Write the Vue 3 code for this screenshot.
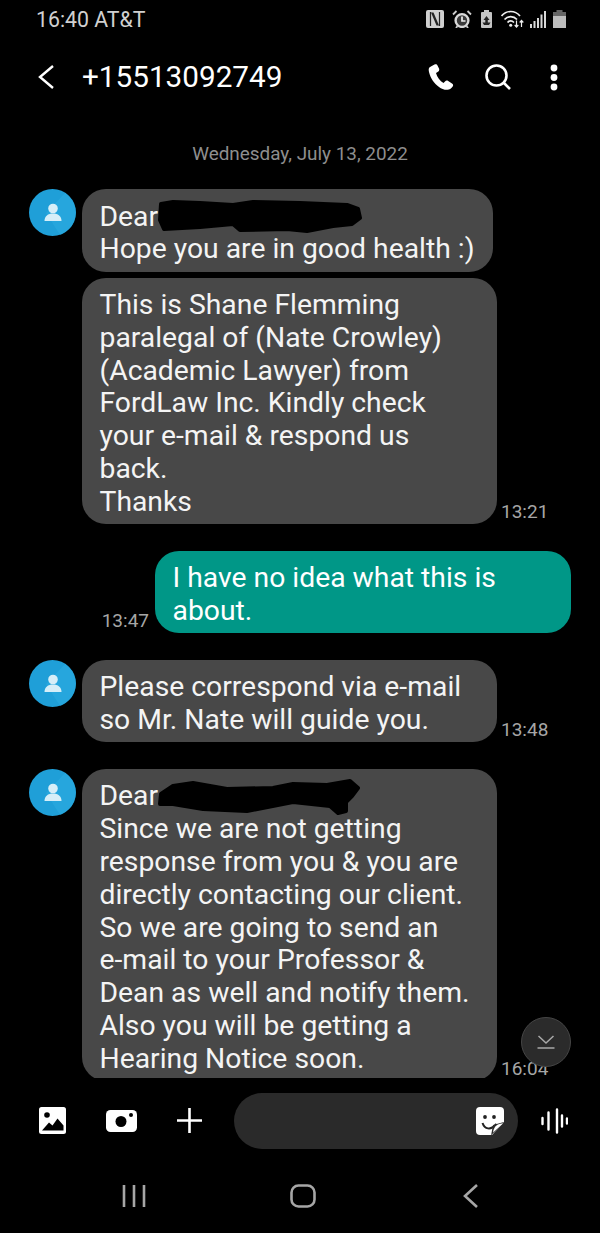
<template>
  <div class="phone">
    <div class="status-bar">
      <span class="status-text">16:40 AT&amp;T</span>
      <div class="status-icons">
        <svg class="ic-nfc" viewBox="0 0 20 18"><rect width="18" height="18" rx="2" fill="#cfcfcf"/><path d="M4.500 2v14M13.500 2v14" stroke="#222" stroke-width="1.200" fill="none"/><path d="M5 2.500h2.500l5.500 13h-2.500z" fill="#222"/></svg>
        <svg class="ic-alarm" viewBox="0 0 20 18"><circle cx="10" cy="10.500" r="6.400" fill="#3a3a3a" stroke="#d8d8d8" stroke-width="2.400"/><path d="M10 6.500v4.500h3.500" fill="none" stroke="#eee" stroke-width="1.700"/><path d="M1 4.500 4.500 1M19 4.500 15.500 1M5.500 16l-1.500 2M14.500 16l1.500 2" stroke="#ccc" stroke-width="1.800" fill="none"/></svg>
        <svg class="ic-saver" viewBox="0 0 17 18"><path d="M6 0h5v2h2a1 1 0 0 1 1 1v14a1 1 0 0 1-1 1H4a1 1 0 0 1-1-1V3a1 1 0 0 1 1-1h2z" fill="#c4c4c4"/><path d="M8.500 6l3 4H9.800v2.500h2.700L11 15H6l-1.500-2.500h2.800V10H5.500z" fill="#222"/></svg>
        <svg class="ic-wifi" viewBox="0 0 23 18" fill="none" stroke="#eee" stroke-width="1.700"><path d="M0.500 6C5.500 0 14 0 19 6M3.500 9.500c3.500-3.800 9-3.800 12.500 0M6.500 12.500c2-2 4.500-2 6.500 0"/><circle cx="9.700" cy="15.300" r="1.500" fill="#eee" stroke="none"/><path d="M15.500 10.500v6.500M13.700 15l1.800 2 1.800-2M20.500 17v-6.500M18.700 12.500l1.800-2 1.800 2" stroke-width="1.200"/></svg>
        <svg class="ic-signal" viewBox="0 0 16 17" fill="#d8d8d8"><rect x="0" y="13" width="2" height="4"/><rect x="3.500" y="10" width="2" height="7"/><rect x="7" y="7" width="2" height="10"/><rect x="10.500" y="3.500" width="2" height="13.500"/><rect x="14" y="0" width="2" height="17"/></svg>
        <svg class="ic-battery" viewBox="0 0 14 18"><rect x="4.500" y="0" width="6" height="2" fill="#666"/><rect x="1" y="2" width="13" height="4" fill="#666"/><rect x="1" y="6" width="13" height="12" fill="#bdbdbd"/></svg>
      </div>
    </div>

    <header class="top-bar">
      <svg class="ic-back" viewBox="0 0 16 24" fill="none" stroke="#fff" stroke-width="2.400"><path d="M15 1 2 12l13 11"/></svg>
      <span class="title">+15513092749</span>
      <svg class="ic-phone" viewBox="0 0 26 26"><path d="M6.500 0.500 2 3C0.500 4 0.500 6 1 8c1.500 6 5 11.500 10 15 2.500 2 5.500 3 8.500 2.800 2 0 3.500-1 5-3 1-1.200.8-2.500-.5-3.300l-3.800-2.500c-1.200-.8-2.300-.6-3.200.4l-1.500 1.600c-3.500-2-6.500-6-7.500-10l2-1.200c1.200-.8 1.500-2 1-3.200L9.500 1.500C9 .2 7.800-.2 6.500 .5z" fill="#fff"/></svg>
      <svg class="ic-search" viewBox="0 0 26 26" fill="none" stroke="#fff" stroke-width="2.600"><circle cx="11.500" cy="11.500" r="10"/><path d="m18.500 18.500 6.500 6.500"/></svg>
      <svg class="ic-dots" viewBox="0 0 8 27" fill="#fff"><circle cx="4" cy="4" r="3.400"/><circle cx="4" cy="13.500" r="3.400"/><circle cx="4" cy="23" r="3.400"/></svg>
    </header>

    <main class="thread">
      <div class="date">Wednesday, July 13, 2022</div>

      <div v-for="group in groups" :key="group.id" class="group" :class="{ sent: group.sent }">
        <div v-if="!group.sent" class="avatar">
          <svg viewBox="0 0 47 47">
            <circle cx="23.500" cy="23.500" r="23.500" fill="#1f9fd8"/>
            <path d="M36 4A23.500 23.500 0 0 1 31 45.800L17 24z" fill="#2aa9df" opacity="0.700"/>
            <circle cx="24" cy="19.500" r="4.800" fill="#d6eef8"/>
            <path d="M15.500 32c0-5 3.500-7.500 8.500-7.500s8.500 2.500 8.500 7.500z" fill="#d6eef8"/>
          </svg>
        </div>
        <div class="stack">
          <div v-for="msg in group.messages" :key="msg.text" class="line">
            <span v-if="group.sent && msg.time" class="time">{{ msg.time }}</span>
            <div class="bubble">
              {{ msg.text }}
              <!-- black marker over the names in the original -->
              <svg v-if="msg.scribble === 1" class="scribble s1" viewBox="0 0 205 36">
                <path d="M4 7 16 5 43 6 76 8 96 5 143 6 190 8 201 12 203 21 195 27 176 29 150 34 130 32 83 33 76 27 43 30 7 32 3 23z" fill="#000" stroke="#000" stroke-width="4" stroke-linejoin="round"/>
              </svg>
              <svg v-if="msg.scribble === 2" class="scribble s2" viewBox="0 0 210 38">
                <path d="M6 16 18 8 38 5 72 11 118 10 138 6 172 7 195 3 203 10 197 18 191 24 191 33 183 35 175 28 138 24 92 33 48 31 18 26 5 26z" fill="#000" stroke="#000" stroke-width="4" stroke-linejoin="round"/>
              </svg>
            </div>
            <span v-if="!group.sent && msg.time" class="time">{{ msg.time }}</span>
          </div>
        </div>
      </div>

      <button class="scroll-down">
        <svg viewBox="0 0 18 14" fill="none" stroke="#a8a8a8" stroke-width="1.500"><path d="M1.500 1 9 8l7.500-7M0.500 13h17"/></svg>
      </button>
    </main>

    <div class="composer">
      <svg class="ic-gallery" viewBox="0 0 27 27"><rect width="27" height="27" rx="2.500" fill="#fff"/><circle cx="8" cy="8" r="2.800" fill="#000"/><path d="M3 23.500l7-8 3.500 3 5-7 6 7v5z" fill="#000"/></svg>
      <svg class="ic-camera" viewBox="0 0 31 22"><rect width="31" height="22" rx="4.500" fill="#fff"/><circle cx="15" cy="11.500" r="5.500" fill="#000"/><circle cx="25" cy="5" r="2" fill="#000"/></svg>
      <svg class="ic-plus" viewBox="0 0 25 25" stroke="#fff" stroke-width="2.600"><path d="M12.500 0v25M0 12.500h25"/></svg>
      <div class="input-pill">
        <svg class="ic-sticker" viewBox="0 0 28 28"><path d="M4 0h20a4 4 0 0 1 4 4v11L16 28H4a4 4 0 0 1-4-4V4a4 4 0 0 1 4-4z" fill="#fff"/><circle cx="9" cy="10" r="1.900" fill="#222"/><circle cx="18" cy="10" r="1.900" fill="#222"/><path d="M6.500 16c2 6 8 8 14 1" fill="none" stroke="#222" stroke-width="2"/><path d="M28 15 17 18l-2 10.500z" fill="#2a2a2a"/><path d="M27 16.500c-5 0-9 2-10 9z" fill="#fff"/></svg>
      </div>
      <svg class="ic-voice" viewBox="0 0 27 26" stroke="#fff" stroke-width="2.400" stroke-linecap="round"><path d="M1.500 10v6M7.500 4.500v17M16 1.500v23M21 7.500v11M26 10.500v5"/></svg>
    </div>

    <nav class="nav-bar">
      <svg class="ic-recents" viewBox="0 0 24 24" stroke="#a6a6a6" stroke-width="2.600"><path d="M2 1v22M12 1v22M22 1v22"/></svg>
      <svg class="ic-home" viewBox="0 0 26 24" fill="none" stroke="#a6a6a6" stroke-width="2.600"><rect x="1.500" y="1.500" width="23" height="21" rx="7"/></svg>
      <svg class="ic-navback" viewBox="0 0 15 24" fill="none" stroke="#a6a6a6" stroke-width="2.600"><path d="M14 1 2 12l12 11"/></svg>
    </nav>
  </div>
</template>

<script setup>
const groups = [
  {
    id: 1,
    messages: [
      { text: 'Dear\nHope you are in good health :)', scribble: 1 },
      {
        text: 'This is Shane Flemming paralegal of (Nate Crowley) (Academic Lawyer) from FordLaw Inc. Kindly check your e-mail & respond us back.\nThanks',
        time: '13:21'
      }
    ]
  },
  {
    id: 2,
    sent: true,
    messages: [{ text: 'I have no idea what this is about.', time: '13:47' }]
  },
  {
    id: 3,
    messages: [{ text: 'Please correspond via e-mail so Mr. Nate will guide you.', time: '13:48' }]
  },
  {
    id: 4,
    messages: [
      {
        text: 'Dear\nSince we are not getting response from you & you are directly contacting our client. So we are going to send an\ne-mail to your Professor & Dean as well and notify them. Also you will be getting a Hearing Notice soon.',
        time: '16:04',
        scribble: 2
      }
    ]
  }
]
</script>

<style>
body {
  background: #000;
}
</style>

<style scoped>
.phone {
  width: 600px;
  height: 1233px;
  background: #000;
  display: flex;
  flex-direction: column;
  overflow: hidden;
  font-family: Roboto, "Liberation Sans", sans-serif;
  color: #fff;
}

svg {
  display: block;
  flex: none;
}

.status-bar {
  height: 38px;
  display: flex;
  align-items: center;
  justify-content: space-between;
  padding: 0 34px 0 36px;
}

.status-text {
  font-size: 21.300px;
  color: #d0d0d0;
}

.status-icons {
  display: flex;
  align-items: center;
  gap: 6px;
}

.ic-nfc,
.ic-alarm {
  width: 20px;
  height: 18px;
}

.ic-saver {
  width: 17px;
  height: 18px;
}

.ic-wifi {
  width: 23px;
  height: 18px;
}

.ic-signal {
  width: 16px;
  height: 17px;
}

.ic-battery {
  width: 14px;
  height: 18px;
}

.top-bar {
  height: 78px;
  display: flex;
  align-items: center;
  padding: 0 42px 0 38px;
}

.ic-back {
  width: 16px;
  height: 24px;
}

.title {
  flex: 1;
  margin-left: 28px;
  font-size: 29.700px;
  line-height: 40px;
}

.ic-phone,
.ic-search {
  width: 26px;
  height: 26px;
}

.ic-search {
  margin-left: 31px;
}

.ic-dots {
  width: 8px;
  height: 27px;
  margin-left: 39px;
}

.thread {
  position: relative;
  height: 962px;
  overflow: hidden;
  display: flex;
  flex-direction: column;
  gap: 26.500px;
  padding: 27px 29px 0;
  box-sizing: border-box;
}

.date {
  height: 21px;
  flex: none;
  margin-bottom: -1.500px;
  text-align: center;
  font-size: 18.900px;
  line-height: 21px;
  color: #8e8e8e;
}

.group {
  display: flex;
  flex: none;
  gap: 6px;
  align-items: flex-start;
}

.group.sent {
  justify-content: flex-end;
}

.avatar {
  width: 47px;
  height: 47px;
  flex: none;
}

.stack {
  display: flex;
  flex-direction: column;
  gap: 6px;
  min-width: 0;
}

.line {
  display: flex;
  align-items: flex-end;
  gap: 4px;
}

.bubble {
  position: relative;
  box-sizing: border-box;
  max-width: 415px;
  padding: 11.500px 18px 5.500px 17.500px;
  border-radius: 24px;
  background: #484848;
  font-size: 28.300px;
  line-height: 32.800px;
  color: #f4f4f4;
  white-space: pre-line;
}

.sent .bubble {
  max-width: 416px;
  background: #009787;
  color: #fff;
}

.time {
  font-size: 19px;
  line-height: 19px;
  padding-bottom: 3px;
  color: #a6a6a6;
}

.sent .time {
  margin-right: 2px;
}

.scribble {
  position: absolute;
}

.s1 {
  left: 75px;
  top: 8px;
  width: 205px;
  height: 36px;
}

.s2 {
  left: 73px;
  top: 9px;
  width: 210px;
  height: 38px;
}

.scroll-down {
  position: absolute;
  left: 521px;
  top: 901px;
  width: 50px;
  height: 50px;
  padding: 0;
  border: 1px solid #454545;
  border-radius: 50%;
  background: #2b2b2b;
  display: flex;
  align-items: center;
  justify-content: center;
}

.scroll-down svg {
  width: 18px;
  height: 14px;
}

.composer {
  height: 82px;
  display: flex;
  align-items: center;
  padding: 3px 0 0 39px;
  box-sizing: border-box;
}

.ic-gallery {
  width: 27px;
  height: 27px;
}

.ic-camera {
  width: 31px;
  height: 22px;
  margin-left: 40px;
}

.ic-plus {
  width: 25px;
  height: 25px;
  margin-left: 40px;
}

.input-pill {
  width: 284px;
  height: 56px;
  margin-left: 32px;
  border-radius: 28px;
  background: #2a2a2a;
  display: flex;
  align-items: center;
  justify-content: flex-end;
  padding-right: 14px;
  box-sizing: border-box;
}

.ic-sticker {
  width: 28px;
  height: 28px;
}

.ic-voice {
  width: 27px;
  height: 26px;
  margin-left: 23px;
}

.nav-bar {
  flex: 1;
  display: flex;
  align-items: center;
  padding-left: 122px;
  padding-bottom: 2px;
}

.ic-recents {
  width: 24px;
  height: 24px;
}

.ic-home {
  width: 26px;
  height: 24px;
  margin-left: 144px;
}

.ic-navback {
  width: 15px;
  height: 24px;
  margin-left: 147px;
}
</style>
